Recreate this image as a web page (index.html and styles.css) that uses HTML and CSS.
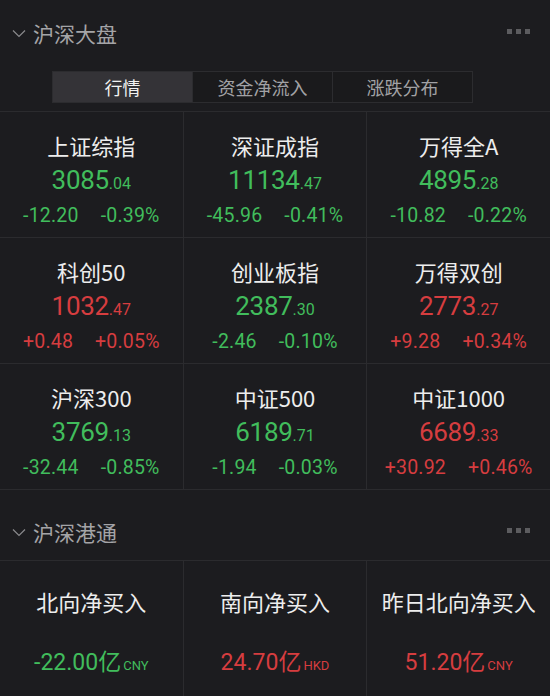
FILE: index.html
```html
<!DOCTYPE html>
<html lang="zh-CN">
<head>
    <meta charset="UTF-8">
    <meta name="viewport" content="width=device-width, initial-scale=1.0">
    <title>沪深大盘</title>
    <link rel="stylesheet" href="styles.css">
</head>
<body>
    <div class="section">
        <div class="section-head first">
            <svg class="chev" width="14" height="9" viewBox="0 0 14 9"><path d="M1 1.5 L7 7.5 L13 1.5" fill="none" stroke="#8a8a8d" stroke-width="1.2"/></svg>
            <span class="section-title">沪深大盘</span>
            <span class="more"><i></i><i></i><i></i></span>
        </div>
        <div class="tabs">
            <div class="tab active">行情</div>
            <div class="tab">资金净流入</div>
            <div class="tab">涨跌分布</div>
        </div>
        <div class="grid">
            <div class="cell">
                <div class="name">上证综指</div>
                <div class="price down">3085<small>.04</small></div>
                <div class="change down"><span>-12.20</span><span>-0.39%</span></div>
            </div>
            <div class="cell">
                <div class="name">深证成指</div>
                <div class="price down">11134<small>.47</small></div>
                <div class="change down"><span>-45.96</span><span>-0.41%</span></div>
            </div>
            <div class="cell">
                <div class="name">万得全A</div>
                <div class="price down">4895<small>.28</small></div>
                <div class="change down"><span>-10.82</span><span>-0.22%</span></div>
            </div>
            <div class="cell">
                <div class="name">科创50</div>
                <div class="price up">1032<small>.47</small></div>
                <div class="change up"><span>+0.48</span><span>+0.05%</span></div>
            </div>
            <div class="cell">
                <div class="name">创业板指</div>
                <div class="price down">2387<small>.30</small></div>
                <div class="change down"><span>-2.46</span><span>-0.10%</span></div>
            </div>
            <div class="cell">
                <div class="name">万得双创</div>
                <div class="price up">2773<small>.27</small></div>
                <div class="change up"><span>+9.28</span><span>+0.34%</span></div>
            </div>
            <div class="cell">
                <div class="name">沪深300</div>
                <div class="price down">3769<small>.13</small></div>
                <div class="change down"><span>-32.44</span><span>-0.85%</span></div>
            </div>
            <div class="cell">
                <div class="name">中证500</div>
                <div class="price down">6189<small>.71</small></div>
                <div class="change down"><span>-1.94</span><span>-0.03%</span></div>
            </div>
            <div class="cell">
                <div class="name">中证1000</div>
                <div class="price up">6689<small>.33</small></div>
                <div class="change up"><span>+30.92</span><span>+0.46%</span></div>
            </div>
        </div>
    </div>

    <div class="section">
        <div class="section-head second">
            <svg class="chev" width="14" height="9" viewBox="0 0 14 9"><path d="M1 1.5 L7 7.5 L13 1.5" fill="none" stroke="#8a8a8d" stroke-width="1.2"/></svg>
            <span class="section-title">沪深港通</span>
            <span class="more"><i></i><i></i><i></i></span>
        </div>
        <div class="grid flow">
            <div class="cell">
                <div class="name">北向净买入</div>
                <div class="amount down">-22.00亿<small>CNY</small></div>
            </div>
            <div class="cell">
                <div class="name">南向净买入</div>
                <div class="amount up">24.70亿<small>HKD</small></div>
            </div>
            <div class="cell">
                <div class="name">昨日北向净买入</div>
                <div class="amount up">51.20亿<small>CNY</small></div>
            </div>
        </div>
    </div>
</body>
</html>
```

FILE: styles.css
```css
body {
    margin: 0;
    background-color: #1c1c1f;
    font-family: "Noto Sans CJK SC", "Noto Sans", sans-serif;
    color: #ececec;
    overflow: hidden;
}
.section-head {
    display: flex;
    align-items: center;
    padding: 0 20px 0 12px;
    box-sizing: border-box;
}
.section-head.first {
    height: 70px;
    padding-bottom: 4px;
}
.section-head.second {
    height: 70px;
    padding-top: 14px;
}
.chev {
    margin-top: 1px;
}
.section-title {
    margin-left: 7px;
    font-size: 21px;
    line-height: 30px;
    color: #a4a4a7;
}
.more {
    margin-left: auto;
    margin-top: -3px;
    display: flex;
    gap: 4px;
}
.more i {
    display: block;
    width: 5px;
    height: 5px;
    background-color: #5c5c5f;
}
.tabs {
    display: flex;
    margin: 1px 0 8px 52px;
    width: 421px;
    height: 32px;
    border: 1px solid #2c2c2f;
    box-sizing: border-box;
}
.tab {
    flex: 1;
    display: flex;
    align-items: center;
    justify-content: center;
    font-size: 18px;
    color: #a2a2a5;
    background-color: #1a1a1c;
    border-left: 1px solid #2c2c2f;
}
.tab:first-child {
    border-left: none;
}
.tab.active {
    background-color: #343337;
    color: #f2f2f2;
}
.grid {
    display: grid;
    grid-template-columns: repeat(3, 1fr);
    gap: 1px;
    background-color: #2b2b2e;
    border-top: 1px solid #2b2b2e;
    border-bottom: 1px solid #2b2b2e;
}
.cell {
    background-color: #1c1c1f;
    height: 125px;
    display: flex;
    flex-direction: column;
    align-items: center;
    padding-top: 18px;
    box-sizing: border-box;
}
.name {
    font-size: 22px;
    line-height: 30px;
    color: #ededed;
}
.price {
    margin-top: 3px;
    font-family: Roboto, "Noto Sans", sans-serif;
    font-size: 26px;
    line-height: 34px;
    letter-spacing: -0.3px;
}
.price small {
    font-size: 16px;
    letter-spacing: 0;
}
.change {
    display: flex;
    gap: 22px;
    font-family: Roboto, "Noto Sans", sans-serif;
    font-size: 19.5px;
    line-height: 30px;
    letter-spacing: 0.2px;
}
.down {
    color: #41bd5c;
}
.up {
    color: #d63d3f;
}
.flow .cell {
    height: 140px;
    padding-top: 25px;
}
.amount {
    margin-top: 32px;
    font-family: Roboto, "Noto Sans CJK SC", sans-serif;
    font-size: 23px;
    line-height: 30px;
}
.amount small {
    margin-left: 2px;
    font-size: 13px;
}
```
